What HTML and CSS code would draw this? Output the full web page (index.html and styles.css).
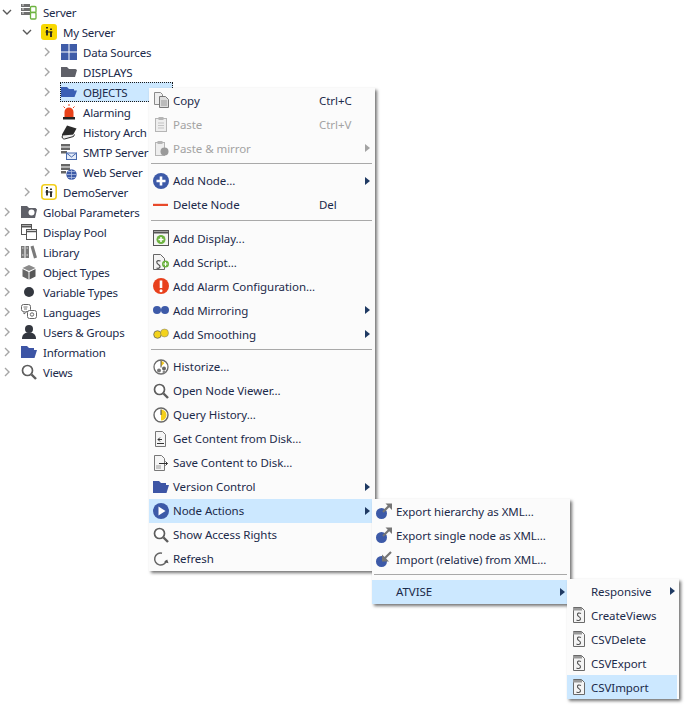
FILE: index.html
```html
<!DOCTYPE html>
<html lang="en">
<head>
<meta charset="utf-8">
<title>Server tree</title>
<link rel="stylesheet" href="styles.css">
</head>
<body>
<svg class="defs" aria-hidden="true">
<defs>
<symbol id="chev-r" viewBox="0 0 10 10"><path d="M3 1l4 4-4 4" fill="none" stroke="#a6a6a6" stroke-width="1.4"/></symbol>
<symbol id="chev-d" viewBox="0 0 10 10"><path d="M1 3l4 4 4-4" fill="none" stroke="#595959" stroke-width="1.4"/></symbol>
<symbol id="i-server" viewBox="0 0 16 16"><path d="M0 0h9v3H0zM0 4h9v3H0zM0 8h9v3H0z" fill="#6f6f6f"/><path d="M1 1h2M1 5h2M1 9h2" stroke="#ddd"/><rect x="9.5" y="2.5" width="5.500" height="6" rx="1" fill="#fff" stroke="#6cb33f" stroke-width="1.300"/><rect x="9.500" y="8.500" width="5.500" height="6.500" rx="1" fill="#fff" stroke="#6cb33f" stroke-width="1.300"/></symbol>
<symbol id="i-yellow" viewBox="0 0 16 16"><rect width="16" height="16" rx="3" fill="#f8d800"/><path d="M6 3v1.500M6 6v5.500M10 4.500V6M10 7.500V13" stroke="#222" stroke-width="1.800" fill="none"/><path d="M4.500 8h7" stroke="#222"/></symbol>
<symbol id="i-yellow-o" viewBox="0 0 16 16"><rect x=".8" y=".8" width="14.400" height="14.400" rx="3" fill="#fff" stroke="#f3cf1c" stroke-width="1.600"/><path d="M6 3v1.500M6 6v5.500M10 4.500V6M10 7.500V13" stroke="#222" stroke-width="1.800" fill="none"/><path d="M4.500 8h7" stroke="#222"/></symbol>
<symbol id="i-grid" viewBox="0 0 16 16"><path d="M0 0h7.500v7.500H0zM8.500 0H16v7.500H8.500zM0 8.500h7.500V16H0zM8.500 8.500H16V16H8.500z" fill="#3f5ca8"/></symbol>
<symbol id="i-folder-g" viewBox="0 0 16 16"><path d="M0 3h6l2 2h6.500l1.500 1-2 7H0z" fill="#5f6068"/></symbol>
<symbol id="i-folder-b" viewBox="0 0 16 16"><path d="M0 3h6l2 2h5v1.500h3L13.500 13H0z" fill="#3a5fb5"/></symbol>
<symbol id="i-folder-n" viewBox="0 0 16 16"><path d="M0 2h6l2 2h5v2h3l-2.500 8H0z" fill="#3d55a5"/></symbol>
<symbol id="i-alarm" viewBox="0 0 16 16"><path d="M3.500 13V8a4.500 4.500 0 0 1 9 0v5z" fill="#e8421a"/><path d="M2 13h12v2.500H2z" fill="#222"/><path d="M8 0v2M2.500 2.500L4 4M13.500 2.500L12 4" stroke="#e8421a"/></symbol>
<symbol id="i-book" viewBox="0 0 16 16"><path d="M6 1.500l9.500 3L12 11l-8 2.500c-2 .5-3.500-1-3-3z" fill="#2b2b2b"/><path d="M1.500 11.500c-1 2 0 3.500 2 3.500l9-2.500 1-2" fill="#eee" stroke="#2b2b2b"/></symbol>
<symbol id="i-smtp" viewBox="0 0 16 16"><path d="M0 0h9v2.500H0zM0 3.500h9V6H0zM0 7h6v2.500H0z" fill="#666"/><rect x="5.500" y="9" width="10" height="6.500" fill="#e4ebf7" stroke="#4669ad"/><path d="M5.500 9l5 4 5-4" fill="none" stroke="#4669ad"/></symbol>
<symbol id="i-web" viewBox="0 0 16 16"><path d="M0 0h9v2.500H0zM0 3.500h9V6H0zM0 7h5v2.500H0z" fill="#666"/><circle cx="10.500" cy="10.500" r="5.200" fill="#3d5ba8"/><path d="M5.500 10.500h10M10.500 5.500v10M7 7.500h7M7 13.500h7" stroke="#b9c7e6" stroke-width=".7"/></symbol>
<symbol id="i-params" viewBox="0 0 16 16"><path d="M0 2h6l2 2h6.500L16 5.500 14 14H0z" fill="#5f6068"/><circle cx="10.500" cy="8.500" r="3" fill="#fff"/></symbol>
<symbol id="i-pool" viewBox="0 0 16 16"><rect x=".5" y=".5" width="10" height="10" fill="#fff" stroke="#555"/><path d="M1 2.500h9" stroke="#555" stroke-width="2"/><rect x="5.500" y="5.500" width="10" height="10" fill="#fff" stroke="#555"/><path d="M6 7.500h9" stroke="#555" stroke-width="1.500"/></symbol>
<symbol id="i-lib" viewBox="0 0 16 16"><path d="M0 2h3.500v12H0zM4.500 2H8v12H4.500zM9.500 2.500l3-1L16 13.500l-3 1z" fill="#7a7a7a"/><path d="M1 4h1.500M5.500 4H7M1 11h1.500M5.500 11H7" stroke="#ddd"/></symbol>
<symbol id="i-cube" viewBox="0 0 16 16"><path d="M8 1l6.500 3L8 7 1.500 4z" fill="#8a8a8a"/><path d="M1.500 5L7.500 8v7.500l-6-3z" fill="#666"/><path d="M14.500 5L8.500 8v7.500l6-3z" fill="#575757"/></symbol>
<symbol id="i-dot" viewBox="0 0 16 16"><circle cx="8" cy="8" r="5" fill="#33373f"/></symbol>
<symbol id="i-lang" viewBox="0 0 16 16"><rect x=".5" y=".5" width="9" height="7" rx="2" fill="#fff" stroke="#666"/><path d="M3 7.500V10l3-2.500" fill="#fff" stroke="#666"/><rect x="6.500" y="6.500" width="9" height="8" rx="2" fill="#fff" stroke="#666"/><circle cx="11" cy="10.500" r="1.700" fill="none" stroke="#666"/><path d="M2.500 3h4M3 5h3" stroke="#777"/></symbol>
<symbol id="i-user" viewBox="0 0 16 16"><circle cx="8" cy="5" r="4" fill="#33373f"/><path d="M1 15c0-5 3-6.500 7-6.500S15 10 15 15z" fill="#33373f"/></symbol>
<symbol id="i-search" viewBox="0 0 16 16"><circle cx="6.500" cy="6.500" r="5" fill="#fff" stroke="#5d5d5d" stroke-width="1.700"/><path d="M10.500 10.500L15 15" stroke="#5d5d5d" stroke-width="2.400"/></symbol>
<symbol id="i-copy" viewBox="0 0 16 16"><path d="M1.500.5h6l2 2v10h-8z" fill="#eee" stroke="#8a8a8a"/><path d="M6.500 4.500h6l3 3v8h-9z" fill="#ddd" stroke="#777"/><path d="M8 9h6M8 11h6M8 13h6" stroke="#999"/></symbol>
<symbol id="i-paste" viewBox="0 0 16 16"><rect x="2.500" y="2.500" width="11" height="13" fill="#eee" stroke="#b5b5b5"/><path d="M5.500 1h5v3h-5z" fill="#b5b5b5"/><path d="M5 7h6M5 9.500h6M5 12h6" stroke="#c4c4c4"/></symbol>
<symbol id="i-pastem" viewBox="0 0 16 16"><rect x="2.500" y="2.500" width="9" height="13" fill="#eee" stroke="#b5b5b5"/><path d="M4.500 1h5v3h-5z" fill="#b5b5b5"/><circle cx="11.500" cy="11.500" r="4" fill="#9a9a9a"/></symbol>
<symbol id="i-plus" viewBox="0 0 16 16"><circle cx="8" cy="8" r="8" fill="#3d5aa8"/><path d="M8 3.500v9M3.500 8h9" stroke="#fff" stroke-width="2.600"/></symbol>
<symbol id="i-minus" viewBox="0 0 16 16"><path d="M0 6.800h15v2.200H0z" fill="#e8492a"/></symbol>
<symbol id="i-window" viewBox="0 0 16 16"><rect x=".5" y=".5" width="15" height="15" fill="#f4f4f4" stroke="#555"/><path d="M1 2.500h14" stroke="#555" stroke-width="2"/><circle cx="8" cy="9.500" r="4.500" fill="#6cb33f"/><path d="M8 7v5M5.500 9.500h5" stroke="#fff" stroke-width="1.500"/></symbol>
<symbol id="i-script" viewBox="0 0 16 16"><path d="M.5.500h7l4 4v11H.5z" fill="#f4f4f4" stroke="#666"/><path d="M7.500 7C5 6 3 7 4 9s3 1.500 3 3.500-2 2-3.500 1.500" fill="none" stroke="#555" stroke-width="1.200"/><circle cx="12.500" cy="10" r="3.500" fill="#6cb33f"/><path d="M12.500 8v4M10.500 10h4" stroke="#fff"/></symbol>
<symbol id="i-alert" viewBox="0 0 16 16"><circle cx="8" cy="8" r="8" fill="#e8401c"/><path d="M8 2.500V10" stroke="#fff" stroke-width="2.600"/><circle cx="8" cy="12.700" r="1.500" fill="#fff"/></symbol>
<symbol id="i-mirror" viewBox="0 0 16 16"><circle cx="4" cy="8" r="4" fill="#3d5aa8"/><circle cx="12" cy="8" r="4" fill="#3d5aa8"/></symbol>
<symbol id="i-smooth" viewBox="0 0 16 16"><circle cx="4.500" cy="8.500" r="3.800" fill="#f3d31c" stroke="#555" stroke-width=".7"/><circle cx="11.500" cy="7" r="4" fill="#f3d31c" stroke="#777" stroke-width=".5"/></symbol>
<symbol id="i-hist" viewBox="0 0 16 16"><circle cx="8" cy="8" r="7" fill="#fff" stroke="#6a6a6a" stroke-width="1.300"/><path d="M8 1.500v6l3.500-3.500z" fill="#f3c81c"/><path d="M8 1.500v7" stroke="#555"/><circle cx="6" cy="11.500" r="2" fill="#777"/><circle cx="11" cy="9.500" r="2" fill="#666"/><circle cx="11" cy="13" r="1.500" fill="#888"/></symbol>
<symbol id="i-query" viewBox="0 0 16 16"><circle cx="8" cy="8" r="7" fill="#fff" stroke="#666" stroke-width="1.400"/><path d="M8 2.500a5.500 5.500 0 0 1 0 11z" fill="#f3cf1c"/><path d="M8 2.500V8" stroke="#444"/></symbol>
<symbol id="i-get" viewBox="0 0 16 16"><path d="M2.500.5h7l3 3v12h-10z" fill="#f5f5f5" stroke="#777"/><path d="M9 8.500H5M7 6.500l-2 2 2 2M4 12.500h7" fill="none" stroke="#333"/></symbol>
<symbol id="i-save" viewBox="0 0 16 16"><path d="M1.500.5h7l3 3v12h-10z" fill="#f5f5f5" stroke="#777"/><path d="M6 8.500h8.500M12.500 6.500l2 2-2 2" fill="none" stroke="#333"/><path d="M3 11h5M3 13h5" stroke="#999"/></symbol>
<symbol id="i-play" viewBox="0 0 16 16"><circle cx="8" cy="8" r="8" fill="#3d5aa8"/><path d="M5.500 3.500L12.500 8l-7 4.500z" fill="#fff"/></symbol>
<symbol id="i-refresh" viewBox="0 0 16 16"><path d="M13.500 9.500A6 6 0 1 1 9 2.200" fill="none" stroke="#666" stroke-width="1.500"/><path d="M11 11l3.200-2.500 1.300 3.800z" fill="#555"/></symbol>
<symbol id="i-export" viewBox="0 0 16 16"><circle cx="5.500" cy="10.500" r="5.500" fill="#3d5aa8"/><path d="M7 9l6-6" stroke="#757575" stroke-width="2.200"/><path d="M9.500 .5H16V7z" fill="#757575"/></symbol>
<symbol id="i-import" viewBox="0 0 16 16"><circle cx="5.500" cy="10.500" r="5.500" fill="#3d5aa8"/><path d="M9 7l6-6" stroke="#757575" stroke-width="2.200"/><path d="M6 3.500V10.500H13z" fill="#757575"/></symbol>
<symbol id="i-doc-s" viewBox="0 0 16 16"><path d="M2.500.5h8l3 3v12h-11z" fill="#f4f4f4" stroke="#6a6a6a"/><path d="M2 1h9v2.500H2z" fill="#999"/><path d="M10 6.500C8 5.500 6 6 6.500 8s3.500 2 3 4-2.500 1.800-4 1" fill="none" stroke="#555" stroke-width="1.100"/></symbol>
</defs>
</svg>

<ul class="tree">
<li class="row lvl0"><svg class="chev"><use href="#chev-d"/></svg><svg class="ico"><use href="#i-server"/></svg><span>Server</span></li>
<li class="row lvl1"><svg class="chev"><use href="#chev-d"/></svg><svg class="ico"><use href="#i-yellow"/></svg><span>My Server</span></li>
<li class="row lvl2"><svg class="chev"><use href="#chev-r"/></svg><svg class="ico"><use href="#i-grid"/></svg><span>Data Sources</span></li>
<li class="row lvl2"><svg class="chev"><use href="#chev-r"/></svg><svg class="ico"><use href="#i-folder-g"/></svg><span>DISPLAYS</span></li>
<li class="row lvl2 current"><svg class="chev"><use href="#chev-r"/></svg><svg class="ico"><use href="#i-folder-b"/></svg><span>OBJECTS</span></li>
<li class="row lvl2"><svg class="chev"><use href="#chev-r"/></svg><svg class="ico"><use href="#i-alarm"/></svg><span>Alarming</span></li>
<li class="row lvl2"><svg class="chev"><use href="#chev-r"/></svg><svg class="ico"><use href="#i-book"/></svg><span>History Arch</span></li>
<li class="row lvl2"><svg class="chev"><use href="#chev-r"/></svg><svg class="ico"><use href="#i-smtp"/></svg><span>SMTP Server</span></li>
<li class="row lvl2"><svg class="chev"><use href="#chev-r"/></svg><svg class="ico"><use href="#i-web"/></svg><span>Web Server</span></li>
<li class="row lvl1"><svg class="chev"><use href="#chev-r"/></svg><svg class="ico"><use href="#i-yellow-o"/></svg><span>DemoServer</span></li>
<li class="row lvl0"><svg class="chev"><use href="#chev-r"/></svg><svg class="ico"><use href="#i-params"/></svg><span>Global Parameters</span></li>
<li class="row lvl0"><svg class="chev"><use href="#chev-r"/></svg><svg class="ico"><use href="#i-pool"/></svg><span>Display Pool</span></li>
<li class="row lvl0"><svg class="chev"><use href="#chev-r"/></svg><svg class="ico"><use href="#i-lib"/></svg><span>Library</span></li>
<li class="row lvl0"><svg class="chev"><use href="#chev-r"/></svg><svg class="ico"><use href="#i-cube"/></svg><span>Object Types</span></li>
<li class="row lvl0"><svg class="chev"><use href="#chev-r"/></svg><svg class="ico"><use href="#i-dot"/></svg><span>Variable Types</span></li>
<li class="row lvl0"><svg class="chev"><use href="#chev-r"/></svg><svg class="ico"><use href="#i-lang"/></svg><span>Languages</span></li>
<li class="row lvl0"><svg class="chev"><use href="#chev-r"/></svg><svg class="ico"><use href="#i-user"/></svg><span>Users &amp; Groups</span></li>
<li class="row lvl0"><svg class="chev"><use href="#chev-r"/></svg><svg class="ico"><use href="#i-folder-n"/></svg><span>Information</span></li>
<li class="row lvl0"><svg class="chev"><use href="#chev-r"/></svg><svg class="ico"><use href="#i-search"/></svg><span>Views</span></li>
</ul>

<div class="menu menu-main">
<div class="item"><svg class="ico"><use href="#i-copy"/></svg><span class="label">Copy</span><span class="key">Ctrl+C</span></div>
<div class="item off"><svg class="ico"><use href="#i-paste"/></svg><span class="label">Paste</span><span class="key">Ctrl+V</span></div>
<div class="item off"><svg class="ico"><use href="#i-pastem"/></svg><span class="label">Paste &amp; mirror</span><i class="arrow"></i></div>
<hr class="sep">
<div class="item"><svg class="ico"><use href="#i-plus"/></svg><span class="label">Add Node...</span><i class="arrow"></i></div>
<div class="item"><svg class="ico"><use href="#i-minus"/></svg><span class="label">Delete Node</span><span class="key">Del</span></div>
<hr class="sep sep-wide">
<div class="item"><svg class="ico"><use href="#i-window"/></svg><span class="label">Add Display...</span></div>
<div class="item"><svg class="ico"><use href="#i-script"/></svg><span class="label">Add Script...</span></div>
<div class="item"><svg class="ico"><use href="#i-alert"/></svg><span class="label">Add Alarm Configuration...</span></div>
<div class="item"><svg class="ico"><use href="#i-mirror"/></svg><span class="label">Add Mirroring</span><i class="arrow"></i></div>
<div class="item"><svg class="ico"><use href="#i-smooth"/></svg><span class="label">Add Smoothing</span><i class="arrow"></i></div>
<hr class="sep">
<div class="item"><svg class="ico"><use href="#i-hist"/></svg><span class="label">Historize...</span></div>
<div class="item"><svg class="ico"><use href="#i-search"/></svg><span class="label">Open Node Viewer...</span></div>
<div class="item"><svg class="ico"><use href="#i-query"/></svg><span class="label">Query History...</span></div>
<div class="item"><svg class="ico"><use href="#i-get"/></svg><span class="label">Get Content from Disk...</span></div>
<div class="item"><svg class="ico"><use href="#i-save"/></svg><span class="label">Save Content to Disk...</span></div>
<div class="item"><svg class="ico"><use href="#i-folder-n"/></svg><span class="label">Version Control</span><i class="arrow"></i></div>
<div class="item on"><svg class="ico"><use href="#i-play"/></svg><span class="label">Node Actions</span><i class="arrow"></i></div>
<div class="item"><svg class="ico"><use href="#i-search"/></svg><span class="label">Show Access Rights</span></div>
<div class="item"><svg class="ico"><use href="#i-refresh"/></svg><span class="label">Refresh</span></div>
</div>

<div class="menu menu-sub">
<div class="item"><svg class="ico"><use href="#i-export"/></svg><span class="label">Export hierarchy as XML...</span></div>
<div class="item"><svg class="ico"><use href="#i-export"/></svg><span class="label">Export single node as XML...</span></div>
<div class="item"><svg class="ico"><use href="#i-import"/></svg><span class="label">Import (relative) from XML...</span></div>
<hr class="sep">
<div class="item on"><span class="ico"></span><span class="label">ATVISE</span><i class="arrow"></i></div>
</div>

<div class="menu menu-leaf">
<div class="item"><span class="ico"></span><span class="label">Responsive</span><i class="arrow"></i></div>
<div class="item"><svg class="ico"><use href="#i-doc-s"/></svg><span class="label">CreateViews</span></div>
<div class="item"><svg class="ico"><use href="#i-doc-s"/></svg><span class="label">CSVDelete</span></div>
<div class="item"><svg class="ico"><use href="#i-doc-s"/></svg><span class="label">CSVExport</span></div>
<div class="item on"><svg class="ico"><use href="#i-doc-s"/></svg><span class="label">CSVImport</span></div>
</div>
</body>
</html>
```
FILE: styles.css
```css
* { box-sizing: border-box; }
html, body { margin: 0; height: 100%; background: #fff; overflow: hidden; }
body {
  position: relative;
  font-family: "Noto Sans", "Open Sans", sans-serif;
  font-size: 11.5px;
  letter-spacing: -0.22px;
  color: #1b2a4a;
}
.defs { position: absolute; width: 0; height: 0; }
.tree { list-style: none; margin: 0; padding: 2px 0 0; }
.row { display: flex; align-items: center; height: 20px; white-space: nowrap; }
.lvl0 { padding-left: 2px; }
.lvl1 { padding-left: 22px; }
.lvl2 { padding-left: 42px; }
.chev { width: 10px; height: 10px; flex: none; margin-right: 9px; }
.ico { width: 16px; height: 16px; flex: none; display: block; }
.row .ico { margin-right: 6px; }
.current { position: relative; }
.current::before {
  content: "";
  position: absolute;
  left: 60px;
  width: 111px;
  top: 0;
  bottom: 0;
  background: #cce8ff;
  border: 1px dotted #1a1a1a;
}
.current > * { position: relative; }
.menu {
  position: absolute;
  background: #fbfbfb;
  letter-spacing: -0.06px;
  box-shadow: 2px 2px 3px rgba(0, 0, 0, .55);
}
.menu-main { left: 149px; top: 88px; width: 226px; padding-right: 3px; }
.menu-sub { left: 372px; top: 499px; width: 198px; padding-right: 3px; }
.menu-leaf { left: 567px; top: 579px; width: 112px; padding-right: 2px; }
.item { display: flex; align-items: center; height: 24px; padding: 0 4px; white-space: nowrap; }
.item .ico { margin-right: 4px; }
.label { width: 146px; }
.menu-sub .label { width: 160px; }
.arrow {
  margin-left: auto;
  width: 0;
  height: 0;
  border-left: 5px solid #1f3a63;
  border-top: 4.5px solid transparent;
  border-bottom: 4.5px solid transparent;
  margin-right: -2px;
}
.off { color: #a3a3a3; }
.off .arrow { border-left-color: #a3a3a3; }
.on { background: #cce8ff; }
.sep { height: 8.5px; margin: 0 0 0 2px; padding: 2.5px 0 0; border: 0; background: none; }
.sep-wide { height: 9.5px; padding-top: 3px; }
.sep::before { content: ""; display: block; height: 1px; background: #a9a9a9; }
```
